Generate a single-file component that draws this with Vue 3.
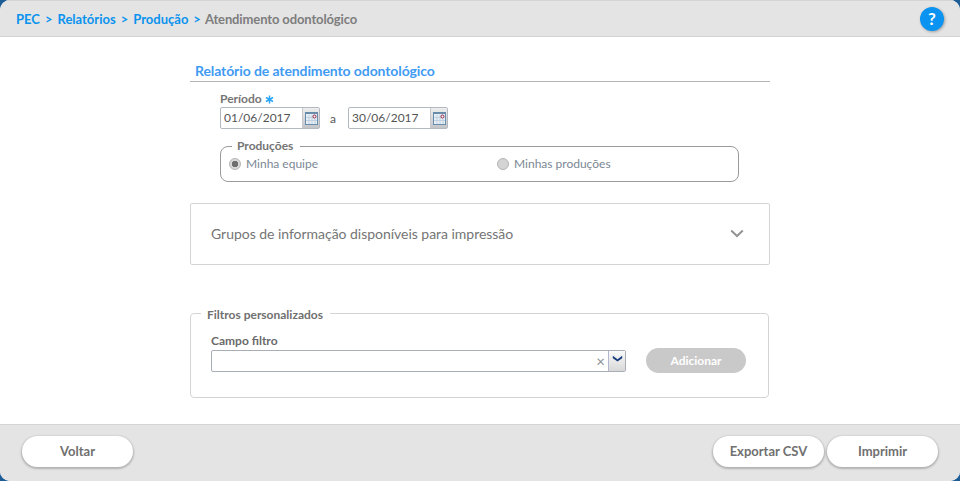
<script setup>
const crumbs = ['PEC', 'Relatórios', 'Produção']
const dates = ['01/06/2017', '30/06/2017']
</script>

<template>
  <div class="app">
    <header class="top">
      <nav class="crumbs">
        <template v-for="c in crumbs" :key="c">
          <a class="crumb">{{ c }}</a><span class="sep">&gt;</span>
        </template>
        <span class="current">Atendimento odontológico</span>
      </nav>
      <button class="help">?</button>
    </header>

    <main class="main">
      <div class="column">
        <h1 class="title">Relatório de atendimento odontológico</h1>

        <div class="period">
          <div class="label">
            <span>Período</span>
            <svg class="req" width="9" height="9" viewBox="0 0 9 9">
              <path d="M4.5 .5v8M1 2.5l7 4M8 2.5l-7 4" stroke="#2aa5f5" stroke-width="1.5" fill="none"/>
            </svg>
          </div>
          <div class="dates">
            <template v-for="(d, i) in dates" :key="d">
              <span v-if="i" class="a">a</span>
              <div class="date">
                <span class="date-val">{{ d }}</span>
                <span class="cal">
                  <svg width="13" height="13" viewBox="0 0 13 13">
                    <rect x=".5" y=".5" width="12" height="12" fill="#e6eef6" stroke="#6a8cab"/>
                    <path d="M1 1.5h11" stroke="#6a8cab"/>
                    <path d="M4 3v9M7 3v9M10 7v5M1 5.5h8M1 8.5h11" stroke="#c0d0de" stroke-width="1"/>
                    <circle cx="9.5" cy="4.5" r="1.5" fill="#fff" stroke="#8f1b3a"/>
                  </svg>
                </span>
              </div>
            </template>
          </div>

          <fieldset class="prod">
            <legend>Produções</legend>
            <div class="radios">
              <label class="radio"><span class="dot on"></span>Minha equipe</label>
              <label class="radio"><span class="dot"></span>Minhas produções</label>
            </div>
          </fieldset>
        </div>

        <section class="accordion">
          <span>Grupos de informação disponíveis para impressão</span>
          <svg width="14" height="9" viewBox="0 0 14 9"><path d="M1.2 1.5 7 7l5.8-5.5" fill="none" stroke="#949494" stroke-width="2"/></svg>
        </section>

        <fieldset class="filters">
          <legend>Filtros personalizados</legend>
          <div class="field-label">Campo filtro</div>
          <div class="filter-row">
            <div class="combo">
              <span class="clear">×</span>
              <span class="arrow">
                <svg width="11" height="7" viewBox="0 0 11 7"><path d="M.8 .8l4.7 3.4L10.2 .8v2.4L5.5 6.6.8 3.2z" fill="#1c3f7f"/></svg>
              </span>
            </div>
            <button class="add">Adicionar</button>
          </div>
        </fieldset>
      </div>
    </main>

    <footer class="bottom">
      <button class="btn">Voltar</button>
      <div class="right">
        <button class="btn">Exportar CSV</button>
        <button class="btn">Imprimir</button>
      </div>
    </footer>
  </div>
</template>

<style>
html, body { margin: 0; background: #1e5c96; }
</style>

<style scoped>
* { box-sizing: border-box; }
.app {
  width: 960px;
  height: 481px;
  display: flex;
  flex-direction: column;
  background: #fff;
  border-radius: 10px;
  overflow: hidden;
  font-family: Lato, "Liberation Sans", sans-serif;
  color: #6f6f6f;
}
.top {
  height: 37px;
  flex: none;
  background: #e4e4e4;
  border: 1px solid #d4d4d4;
  border-width: 1px 0 1px 0;
  display: flex;
  align-items: center;
  justify-content: space-between;
  padding: 0 16px;
}
.crumbs { font-size: 13px; font-weight: 700; display: flex; align-items: center; }
.crumb { color: #0a93ee; }
.sep { color: #0a93ee; margin: 0 5px; }
.current { color: #7d7d7d; margin-left: -1px; letter-spacing: -.12px; }
.help {
  width: 24px; height: 24px;
  border: 0; border-radius: 50%;
  background: #0a93f0;
  color: #fff;
  font: 700 17px Lato, sans-serif;
  padding: 0;
  box-shadow: 1px 1px 3px rgba(0,0,0,.3);
}
.main { flex: 1; min-height: 0; }
.column { width: 580px; margin-left: 190px; padding-top: 26px; }
.title {
  margin: 0;
  height: 19px;
  padding-left: 5px;
  font-size: 14px;
  line-height: 16px;
  font-weight: 700;
  letter-spacing: -.1px;
  color: #3f9bf2;
  border-bottom: 1px solid #b5b5b5;
}
.period { margin-left: 30px; margin-top: 9px; width: 519px; }
.label { display: flex; align-items: center; gap: 3px; font-size: 12px; font-weight: 700; line-height: 15px; color: #757575; height: 15px; }
.req { margin-top: 2px; }
.dates { display: flex; align-items: center; margin-top: 1px; }
.date {
  width: 100px; height: 22px;
  border: 1px solid #b4b8c0;
  border-radius: 2px;
  display: flex;
  justify-content: space-between;
  background: #fff;
}
.date-val { font-size: 12px; line-height: 20px; padding-left: 3px; color: #555; }
.cal {
  width: 17px;
  background: linear-gradient(#eeeeee, #c2c4c8);
  border-left: 1px solid #c6c8cc;
  display: flex; align-items: center; justify-content: center;
}
.a { width: 28px; padding-right: 2px; text-align: center; font-size: 12px; color: #555; }
.prod {
  margin: 10px 0 0;
  padding: 0 8px;
  height: 43px;
  min-width: 0;
  border: 1px solid #9a9a9a;
  border-radius: 8px;
}
.prod legend { margin-left: 3px; padding: 0 7px 0 5px; font-size: 12px; font-weight: 700; color: #757575; line-height: 14px; }
.radios { display: flex; margin-top: 3px; }
.radio { display: flex; align-items: center; width: 268px; font-size: 12px; color: #7b8794; line-height: 16px; white-space: nowrap; }
.radio + .radio { width: auto; }
.dot {
  width: 12px; height: 12px; margin-right: 5px;
  border-radius: 50%;
  background: #d4d4d4;
  border: 1px solid #b4b4b4;
}
.dot.on { background: radial-gradient(circle, #6f6f6f 0 3px, #d9d9d9 3.5px); }
.accordion {
  margin-top: 21px;
  height: 62px;
  border: 1px solid #d4d4d4;
  border-radius: 2px;
  display: flex;
  align-items: center;
  justify-content: space-between;
  padding: 0 25px 2px 20px;
  font-size: 14px;
  letter-spacing: -.03px;
  color: #757575;
}
.filters {
  margin: 39px 0 0;
  width: 579px;
  height: 94px;
  padding: 0 20px;
  border: 1px solid #d4d4d4;
  border-radius: 4px;
}
.filters legend { margin-left: -10px; padding: 4px 7px 0 6px; font-size: 12px; font-weight: 700; color: #707070; line-height: 14px; }
.field-label { font-size: 12px; font-weight: 700; color: #6a6a6a; line-height: 15px; margin-top: 11px; }
.filter-row { display: flex; align-items: center; }
.combo {
  width: 415px; height: 22px;
  border: 1px solid #a9adb8;
  border-radius: 2px;
  display: flex;
  justify-content: flex-end;
  align-items: center;
}
.clear { font-size: 15px; color: #8c9096; margin-right: 3px; line-height: 18px; }
.arrow {
  width: 17px; height: 100%;
  border-left: 1px solid #b2b6d0;
  background: linear-gradient(#fafafa, #d8d8d8);
  display: flex; align-items: center; justify-content: center;
  padding-bottom: 5px;
}
.add {
  margin-left: 20px;
  width: 100px; height: 25px;
  border: 0; border-radius: 13px;
  background: #c9c9c9;
  color: #fff;
  font: 700 12px Lato, sans-serif;
}
.bottom {
  height: 57px;
  flex: none;
  background: #e4e4e4;
  border-top: 1px solid #d4d4d4;
  display: flex;
  align-items: center;
  justify-content: space-between;
  padding: 0 22px 4px;
}
.right { display: flex; gap: 3px; }
.btn {
  width: 111px; height: 31px;
  border: 0; border-radius: 16px;
  background: #fff;
  color: #707070;
  font: 700 13px Lato, sans-serif;
  box-shadow: 0 1px 2px 1px rgba(0,0,0,.22);
}
</style>
